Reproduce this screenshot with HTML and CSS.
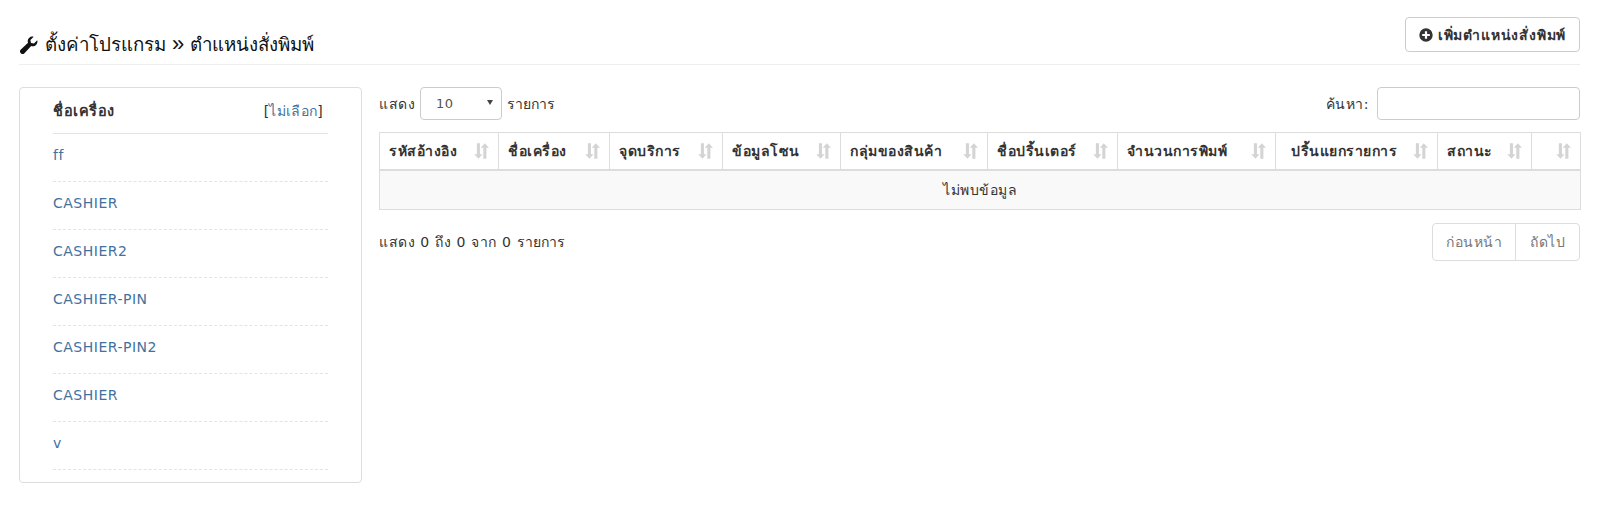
FILE: index.html
```html
<!DOCTYPE html>
<html lang="th">
<head>
<meta charset="utf-8">
<title>ตำแหน่งสั่งพิมพ์</title>
<link rel="stylesheet" href="styles.css">
</head>
<body>
<div class="page">
  <header class="page-head">
    <h1 class="page-title">
      <svg class="icon-wrench" viewBox="0 0 20 20"><path d="M19.200 4.600c.5 1.700.1 3.500-1.200 4.800-1.400 1.400-3.400 1.800-5.200 1.100L5.500 18.300c-.9.900-2.400.9-3.300 0l-.5-.5c-.9-.9-.9-2.400 0-3.300l7.800-7.300C8.800 5.400 9.200 3.400 10.600 2 11.900.7 13.700.3 15.400.8l-3.400 3.400.6 3.200 3.200.6z"/></svg>
      <span>ตั้งค่าโปรแกรม <span class="sep">»</span> ตำแหน่งสั่งพิมพ์</span>
    </h1>
    <button class="btn-add" type="button">
      <svg class="icon-plus" viewBox="0 0 14 14"><path fill-rule="evenodd" d="M7 .3a6.700 6.700 0 1 1 0 13.400A6.700 6.700 0 0 1 7 .3zM5.900 3.200v2.700H3.200v2.200h2.700v2.700h2.200V8.100h2.700V5.900H8.100V3.200z"/></svg>
      เพิ่มตำแหน่งสั่งพิมพ์
    </button>
  </header>

  <main class="content">
    <aside class="panel">
      <div class="panel-head">
        <strong class="panel-title">ชื่อเครื่อง</strong>
        <span class="bracket">[<a href="#">ไม่เลือก</a>]</span>
      </div>
      <ul class="machine-list">
        <li><a href="#">ff</a></li>
        <li><a href="#">CASHIER</a></li>
        <li><a href="#">CASHIER2</a></li>
        <li><a href="#">CASHIER-PIN</a></li>
        <li><a href="#">CASHIER-PIN2</a></li>
        <li><a href="#">CASHIER</a></li>
        <li><a href="#">v</a></li>
      </ul>
    </aside>

    <section class="data">
      <div class="toolbar">
        <label class="length">แสดง
          <span class="fake-select"><span>10</span><i class="caret"></i></span>
          <span class="unit">รายการ</span>
        </label>
        <label class="search">ค้นหา: <input type="text" class="search-input"></label>
      </div>

      <table class="grid">
        <colgroup>
          <col class="c1"><col class="c2"><col class="c3"><col class="c4"><col class="c5"><col class="c6"><col class="c7"><col class="c8"><col class="c9"><col class="c10">
        </colgroup>
        <thead>
          <tr>
            <th>รหัสอ้างอิง<svg class="sort" viewBox="0 0 14 14"><path d="M3.800 1h2.400v8.500h2L5 13 1.800 9.500h2zM10 1l3.200 3.500h-2V13H8.800V4.500h-2z"/></svg></th>
            <th>ชื่อเครื่อง<svg class="sort" viewBox="0 0 14 14"><path d="M3.800 1h2.400v8.500h2L5 13 1.800 9.500h2zM10 1l3.200 3.500h-2V13H8.800V4.500h-2z"/></svg></th>
            <th>จุดบริการ<svg class="sort" viewBox="0 0 14 14"><path d="M3.800 1h2.400v8.500h2L5 13 1.800 9.500h2zM10 1l3.200 3.500h-2V13H8.800V4.500h-2z"/></svg></th>
            <th>ข้อมูลโซน<svg class="sort" viewBox="0 0 14 14"><path d="M3.800 1h2.400v8.500h2L5 13 1.800 9.500h2zM10 1l3.200 3.500h-2V13H8.800V4.500h-2z"/></svg></th>
            <th>กลุ่มของสินค้า<svg class="sort" viewBox="0 0 14 14"><path d="M3.800 1h2.400v8.500h2L5 13 1.800 9.500h2zM10 1l3.200 3.500h-2V13H8.800V4.500h-2z"/></svg></th>
            <th>ชื่อปริ้นเตอร์<svg class="sort" viewBox="0 0 14 14"><path d="M3.800 1h2.400v8.500h2L5 13 1.800 9.500h2zM10 1l3.200 3.500h-2V13H8.800V4.500h-2z"/></svg></th>
            <th>จำนวนการพิมพ์<svg class="sort" viewBox="0 0 14 14"><path d="M3.800 1h2.400v8.500h2L5 13 1.800 9.500h2zM10 1l3.200 3.500h-2V13H8.800V4.500h-2z"/></svg></th>
            <th class="centered">ปริ้นแยกรายการ<svg class="sort" viewBox="0 0 14 14"><path d="M3.800 1h2.400v8.500h2L5 13 1.800 9.500h2zM10 1l3.200 3.500h-2V13H8.800V4.500h-2z"/></svg></th>
            <th>สถานะ<svg class="sort" viewBox="0 0 14 14"><path d="M3.800 1h2.400v8.500h2L5 13 1.800 9.500h2zM10 1l3.200 3.500h-2V13H8.800V4.500h-2z"/></svg></th>
            <th><svg class="sort" viewBox="0 0 14 14"><path d="M3.800 1h2.400v8.500h2L5 13 1.800 9.500h2zM10 1l3.200 3.500h-2V13H8.800V4.500h-2z"/></svg></th>
          </tr>
        </thead>
        <tbody>
          <tr><td colspan="10" class="empty">ไม่พบข้อมูล</td></tr>
        </tbody>
      </table>

      <div class="foot">
        <div class="info">แสดง 0 ถึง 0 จาก 0 <span class="unit">รายการ</span></div>
        <nav class="pager">
          <a href="#" class="pg">ก่อนหน้า</a>
          <a href="#" class="pg">ถัดไป</a>
        </nav>
      </div>
    </section>
  </main>
</div>
</body>
</html>
```
FILE: styles.css
```css
* { box-sizing: border-box; }
html, body { margin: 0; padding: 0; background: #fff; }
body {
  font-family: "DejaVu Sans", "Noto Sans", sans-serif;
  font-size: 14px;
  letter-spacing: 0.5px;
  line-height: 20px;
  color: #333;
  height: 528px;
  overflow: hidden;
}
a { color: #43719f; text-decoration: none; }
.page { padding: 17px 28px 0 19px; }

.page-head {
  display: flex;
  justify-content: space-between;
  align-items: flex-start;
  height: 48px;
  border-bottom: 1px solid #eee;
}
.page-title {
  display: flex;
  align-items: center;
  gap: 7px;
  margin: 14px 0 0;
  font-size: 18.7px;
  font-weight: 400;
  letter-spacing: 0;
  line-height: 28px;
  color: #111;
}
.sep { font-family: "Liberation Sans", sans-serif; font-size: 22px; font-weight: 400; line-height: 20px; }
.icon-wrench { width: 19px; height: 19px; fill: #111; }
.btn-add {
  display: flex;
  align-items: center;
  justify-content: center;
  gap: 5px;
  width: 175px;
  height: 35px;
  padding: 0;
  background: #fff;
  border: 1px solid #ccc;
  border-radius: 4px;
  font: bold 14px "DejaVu Sans", "Noto Sans", sans-serif;
  letter-spacing: 0.8px;
  color: #333;
}
.icon-plus { width: 14px; height: 14px; fill: #333; }

.content {
  display: flex;
  align-items: flex-start;
  gap: 17px;
  margin-top: 22px;
}
.panel {
  flex: 0 0 343px;
  height: 396px;
  padding: 0 33px;
  border: 1px solid #ddd;
  border-radius: 4px;
}
.panel-head {
  display: flex;
  justify-content: space-between;
  align-items: center;
  height: 46px;
  padding-right: 5px;
  border-bottom: 1px solid #e4e4e4;
}
.panel-title { font-size: 14.5px; }
.bracket { color: #333; letter-spacing: 0.3px; }
.machine-list { list-style: none; margin: 0; padding: 0; }
.machine-list li {
  height: 48px;
  padding-top: 11px;
  border-bottom: 1px dashed #e4e4e4;
}

.data { flex: 1; min-width: 0; }
.toolbar {
  display: flex;
  justify-content: space-between;
  align-items: center;
  height: 33px;
}
.unit { letter-spacing: 0; }
.length, .search { display: flex; align-items: center; gap: 5px; }
.fake-select {
  position: relative;
  display: flex;
  align-items: center;
  width: 82px;
  height: 33px;
  padding-left: 15px;
  font-size: 13px;
  color: #555;
  border: 1px solid #ccc;
  border-radius: 4px;
}
.caret {
  position: absolute;
  right: 8px;
  top: 12px;
  border: 3px solid transparent;
  border-top: 5px solid #444;
  border-bottom: 0;
}
.search { gap: 8px; }
.search-input {
  width: 203px;
  height: 33px;
  border: 1px solid #ccc;
  border-radius: 4px;
  background: #fff;
}

.grid {
  width: 1201px;
  margin-top: 12px;
  table-layout: fixed;
  border-collapse: collapse;
  border: 1px solid #ddd;
}
.c1 { width: 119px; }
.c2 { width: 111px; }
.c3 { width: 113px; }
.c4 { width: 118px; }
.c5 { width: 147px; }
.c6 { width: 130px; }
.c7 { width: 158px; }
.c8 { width: 162px; }
.c9 { width: 94px; }
.c10 { width: 49px; }
.grid th {
  position: relative;
  height: 37px;
  padding: 0 8px 0 9px;
  border: 1px solid #ddd;
  border-bottom: 2px solid #ddd;
  text-align: left;
  font-weight: bold;
  white-space: nowrap;
}
.grid th.centered { text-align: center; padding-right: 34px; }
.sort {
  position: absolute;
  right: 8px;
  top: 9px;
  width: 18px;
  height: 18px;
  fill: #d4d4d4;
}
.empty {
  height: 40px;
  background: #f9f9f9;
  text-align: center;
}

.foot {
  display: flex;
  justify-content: space-between;
  align-items: flex-start;
  margin-top: 13px;
}
.info { padding-top: 9px; word-spacing: 0.4px; }
.pager { display: flex; }
.pg {
  display: flex;
  align-items: center;
  height: 38px;
  padding: 0 14px;
  border: 1px solid #ddd;
  color: #777;
}
.pg:first-child { padding: 0 13px; border-radius: 4px 0 0 4px; }
.pg:last-child { margin-left: -1px; border-radius: 0 4px 4px 0; }
```
